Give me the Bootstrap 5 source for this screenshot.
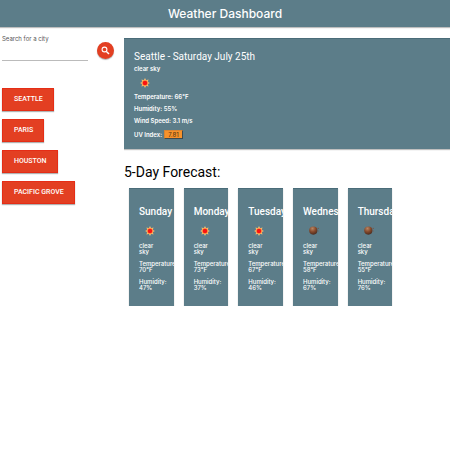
<!DOCTYPE html>
<html lang="en">
<head>
<meta charset="utf-8">
<meta name="viewport" content="width=device-width, initial-scale=1">
<title>Weather Dashboard</title>
<link href="https://cdn.jsdelivr.net/npm/bootstrap@5.3.0/dist/css/bootstrap.min.css" rel="stylesheet">
<style>
  :root { --slate: #5c7d89; --flame: #e33f22; }
  body { font-family: Inter, "Liberation Sans", sans-serif; font-size: 6px; line-height: 6px; color: #000; background: #fff; }
  .topbar { background: var(--slate); height: 27px; box-shadow: 0 1px 1px rgba(0,0,0,.25); }
  .topbar h1 { font-size: 12px; line-height: 27px; font-weight: 500; }
  .side { width: 124px; padding: 9px 10px 0 2px; }
  .search-label { font-size: 6px; line-height: 6px; color: #555; }
  .search-box { width: 86px; }
  .search-input { border: 0; border-bottom: 1px solid #bbb; border-radius: 0; padding: 0; height: 19px; min-height: 0; font-size: 8px; }
  .round-btn { width: 17px; height: 17px; margin-top: 6px; background: var(--flame); box-shadow: 0 1px 1px rgba(0,0,0,.3); }
  .cities { gap: 8px; margin-top: 27px; }
  .city-btn { --bs-btn-font-size: 7px; --bs-btn-color: #fff; --bs-btn-bg: var(--flame); --bs-btn-border-color: #e52d16; --bs-btn-hover-color: #fff; --bs-btn-hover-bg: #cf3418; --bs-btn-border-radius: 0; padding: 0 10px 0 11px; height: 23px; line-height: 21px; font-family: Roboto, sans-serif; font-weight: 500; box-shadow: 0 1px 1px rgba(0,0,0,.3); }
  .main { padding-top: 11px; min-width: 0; }
  .panel { background: var(--slate); box-shadow: 0 1px 1px rgba(0,0,0,.25); border-top: 1px solid #4a6c79; }
  .panel p { margin: 0; }
  .today { padding: 12px 10px 10px; font-weight: 600; }
  .today h2 { font-family: Roboto, sans-serif; font-size: 10px; line-height: 12px; font-weight: 400; margin: 0 0 3px; }
  .today .stat { margin-top: 6px; }
  .today .sky-icon { margin: 6px 0 6px 6px; }
  .uv { font-size: 6px; line-height: 7px; font-weight: 500; padding: 0 3px; background: #f7922b; color: #5b3a12; border: 1px solid; border-color: #d98532 #3d4a4e #3d4a4e #d98532; margin-left: 2px; }
  .forecast-title { font-family: Roboto, sans-serif; font-size: 14px; line-height: 18px; font-weight: 400; margin: 14px 0 7px; }
  .forecast { --bs-gutter-x: 10px; margin: 0 -2px 0 0; }
  .day { height: 118px; padding: 17px 0 0 10px; font-weight: 500; overflow: hidden; }
  .day h3 { font-family: Roboto, sans-serif; font-size: 10px; line-height: 12px; font-weight: 500; margin: 0 0 8px; }
  .day .sky-icon { margin: 0 0 7px 6px; }
  .day p + p { margin-top: 6px; }
</style>
<script src="https://cdn.jsdelivr.net/npm/bootstrap@5.3.0/dist/js/bootstrap.bundle.min.js" defer></script>
</head>
<body>
<svg class="position-absolute" width="0" height="0" aria-hidden="true">
  <defs><radialGradient id="moonFill" cx=".4" cy=".25" r=".8"><stop offset="0" stop-color="#b98663"/><stop offset=".5" stop-color="#85492b"/><stop offset="1" stop-color="#45281d"/></radialGradient></defs>
  <symbol id="sun" viewBox="0 0 10 10">
    <path d="M5 0L6.1 2.3 8.5 1.5 7.7 3.9 10 5 7.7 6.1 8.5 8.5 6.1 7.7 5 10 3.9 7.7 1.5 8.5 2.3 6.1 0 5 2.3 3.9 1.5 1.5 3.9 2.3z" fill="#ffc47a"/>
    <circle cx="5" cy="5" r="3.3" fill="#f9a04d"/>
    <circle cx="5" cy="5" r="2.3" fill="#fb1212"/>
  </symbol>
  <symbol id="moon" viewBox="0 0 10 10">
    <circle cx="4.3" cy="4.6" r="4.1" fill="url(#moonFill)"/>
    <circle cx="9.2" cy="2.3" r=".6" fill="#7c4d3b"/>
    <circle cx="9.2" cy="4.9" r=".5" fill="#7c5a4d"/>
  </symbol>
</svg>
<header class="topbar text-white text-center"><h1 class="m-0">Weather Dashboard</h1></header>
<div class="d-flex">
  <aside class="side flex-shrink-0">
    <form class="d-flex justify-content-between align-items-start" onsubmit="return false">
      <div class="search-box">
        <label class="search-label d-block" for="city">Search for a city</label>
        <input class="search-input form-control shadow-none" id="city" type="text">
      </div>
      <button class="round-btn btn rounded-circle p-0 border-0 d-flex align-items-center justify-content-center" type="submit" aria-label="Search">
        <svg width="9" height="9" viewBox="0 0 9 9" fill="none" stroke="#fff"><circle cx="3.5" cy="3.5" r="2.4" stroke-width="1.1"/><path d="M5.4 5.4L8 8" stroke-width="1.4"/></svg>
      </button>
    </form>
    <div class="cities d-flex flex-column align-items-start">
      <button class="btn city-btn" type="button">SEATTLE</button>
      <button class="btn city-btn" type="button">PARIS</button>
      <button class="btn city-btn" type="button">HOUSTON</button>
      <button class="btn city-btn text-nowrap" type="button">PACIFIC GROVE</button>
    </div>
  </aside>
  <main class="main flex-grow-1 overflow-hidden">
    <section class="panel today text-white">
      <h2>Seattle - Saturday July 25th</h2>
      <p>clear sky</p>
      <svg class="sky-icon d-block" width="10" height="10"><use href="#sun"/></svg>
      <p class="stat">Temperature: 66°F</p>
      <p class="stat">Humidity: 55%</p>
      <p class="stat">Wind Speed: 3.1 m/s</p>
      <p class="stat d-flex align-items-center">UV Index: <span class="uv">7.81</span></p>
    </section>
    <h2 class="forecast-title">5-Day Forecast:</h2>
    <div class="row row-cols-6 forecast">
      <div class="col"><article class="panel day text-white"><h3>Sunday</h3><svg class="sky-icon d-block" width="10" height="10"><use href="#sun"/></svg><p>clear<br>sky</p><p>Temperature: 70°F</p><p>Humidity: 47%</p></article></div>
      <div class="col"><article class="panel day text-white"><h3>Monday</h3><svg class="sky-icon d-block" width="10" height="10"><use href="#sun"/></svg><p>clear<br>sky</p><p>Temperature: 73°F</p><p>Humidity: 37%</p></article></div>
      <div class="col"><article class="panel day text-white"><h3>Tuesday</h3><svg class="sky-icon d-block" width="10" height="10"><use href="#sun"/></svg><p>clear<br>sky</p><p>Temperature: 67°F</p><p>Humidity: 46%</p></article></div>
      <div class="col"><article class="panel day text-white"><h3>Wednesday</h3><svg class="sky-icon d-block" width="10" height="10"><use href="#moon"/></svg><p>clear<br>sky</p><p>Temperature: 58°F</p><p>Humidity: 67%</p></article></div>
      <div class="col"><article class="panel day text-white"><h3>Thursday</h3><svg class="sky-icon d-block" width="10" height="10"><use href="#moon"/></svg><p>clear<br>sky</p><p>Temperature: 55°F</p><p>Humidity: 76%</p></article></div>
    </div>
  </main>
</div>
</body>
</html>
